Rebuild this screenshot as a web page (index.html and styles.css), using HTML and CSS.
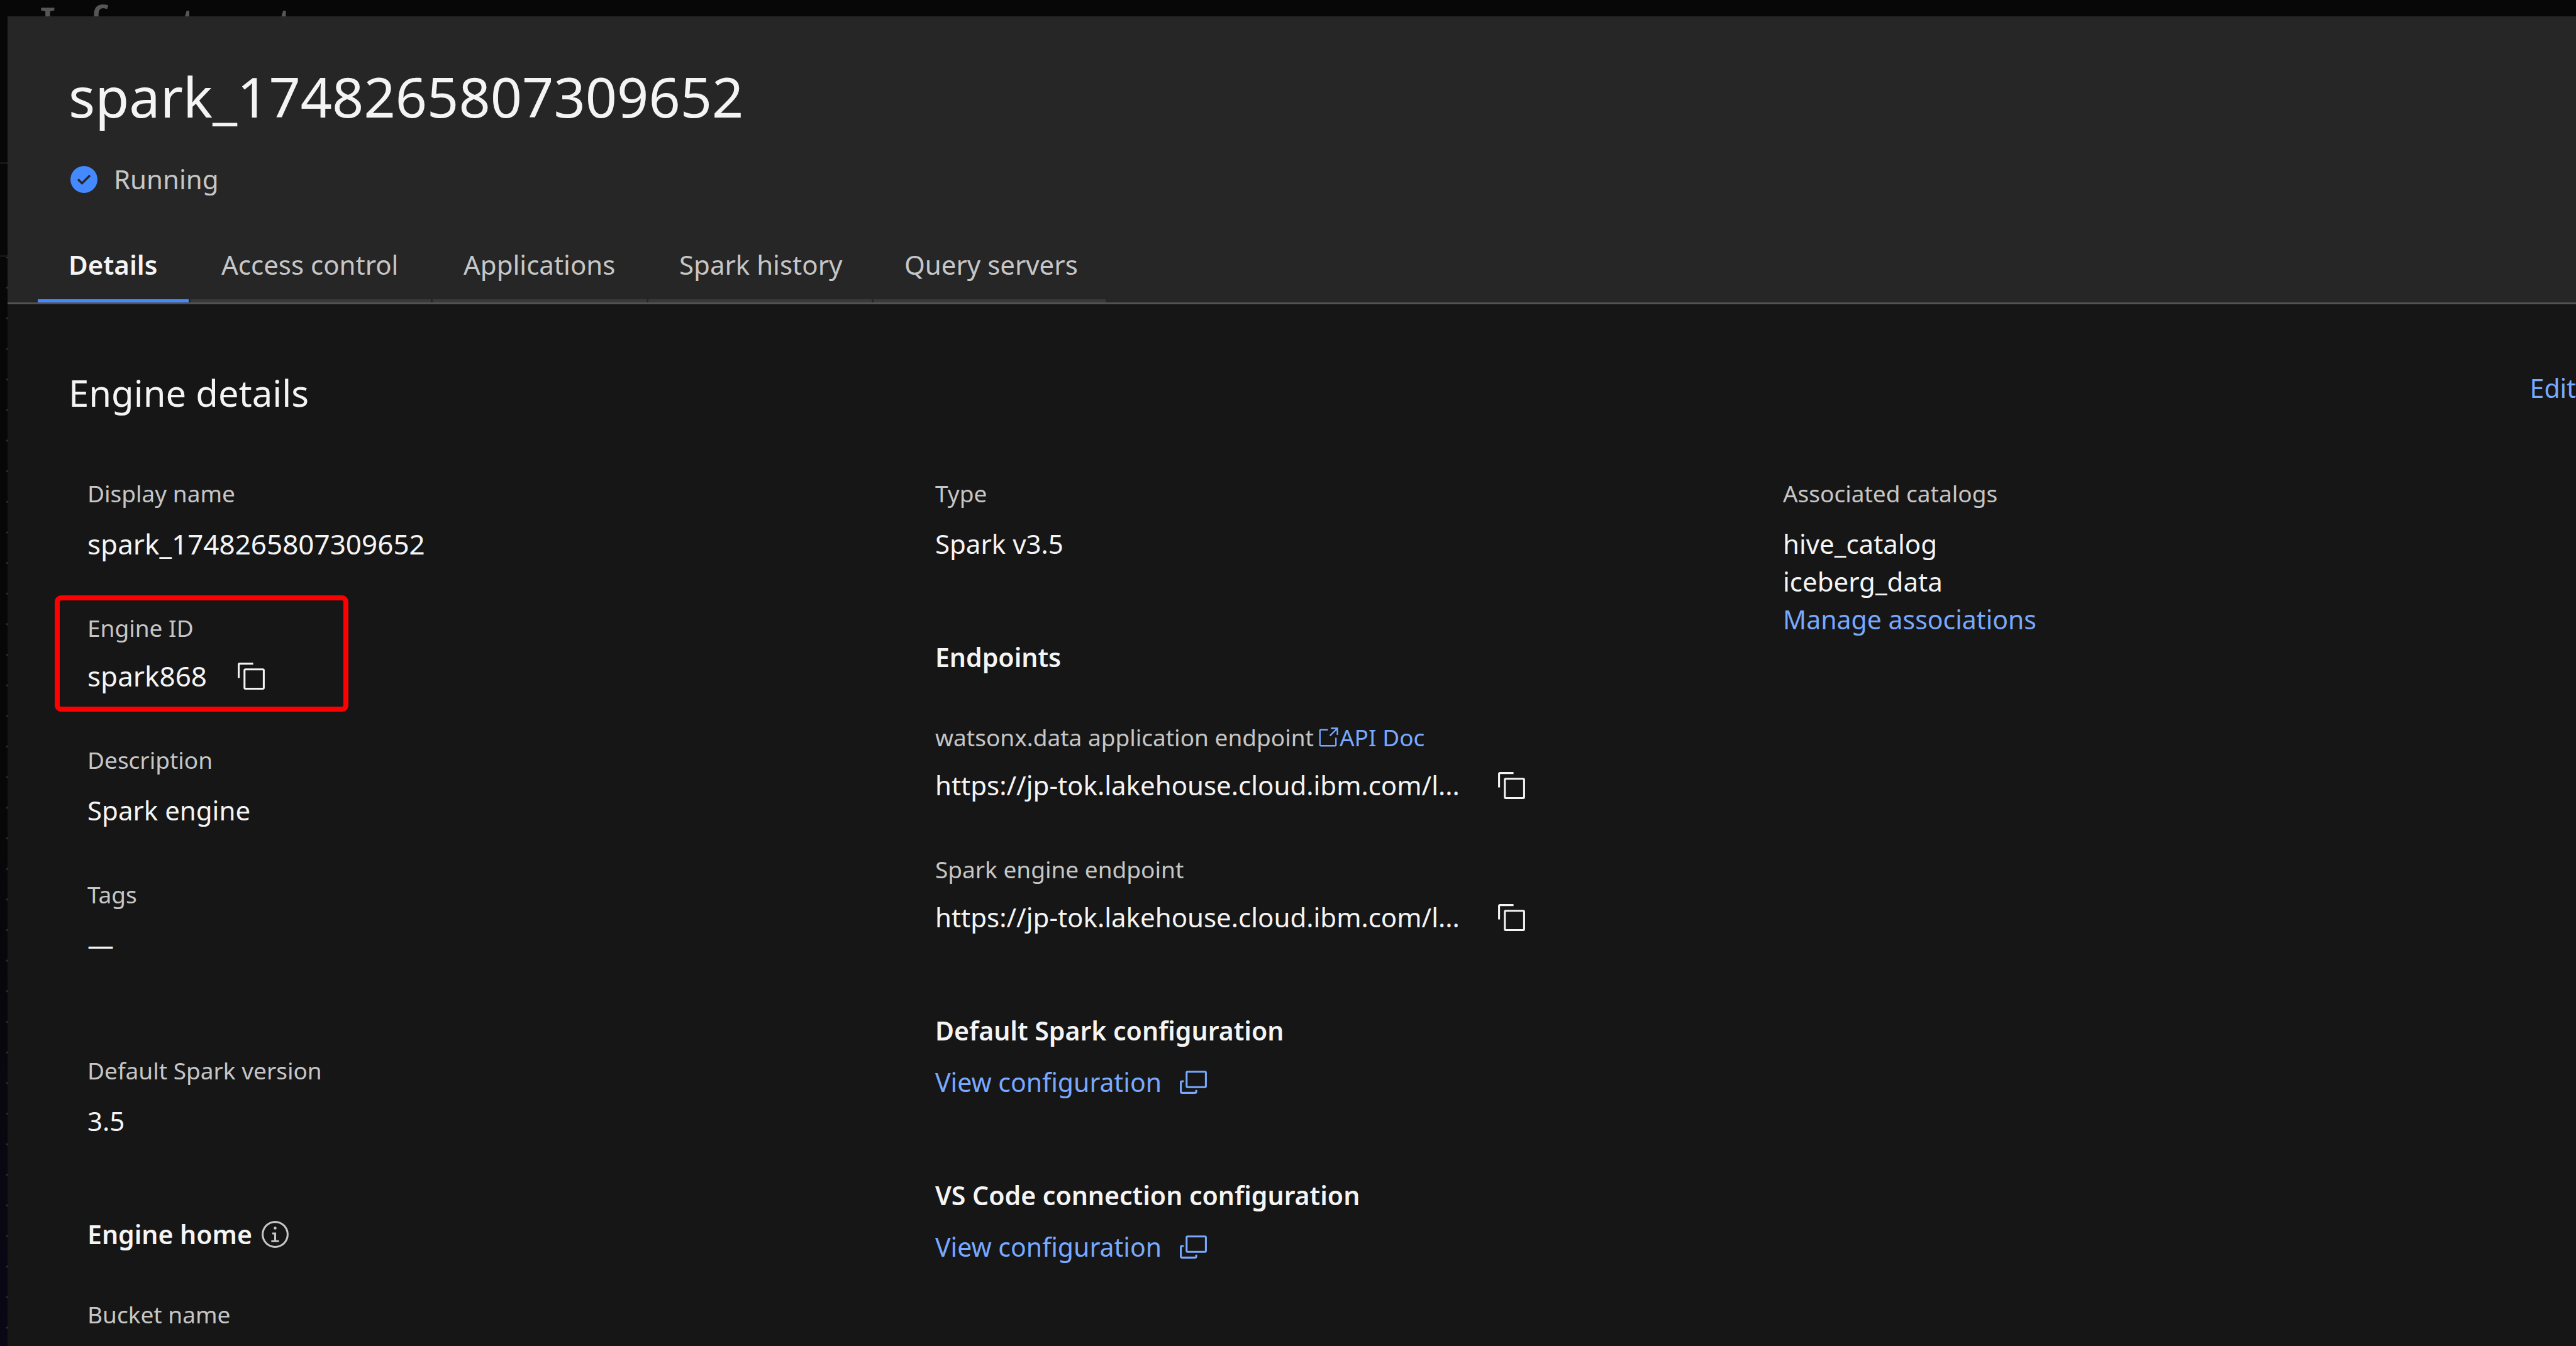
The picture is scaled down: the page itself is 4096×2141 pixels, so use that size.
FILE: index.html
```html
<!DOCTYPE html>
<html lang="en">
<head>
<meta charset="utf-8">
<title>spark_1748265807309652 - Engine details</title>
<link rel="stylesheet" href="styles.css">
</head>
<body>
<svg class="sprite" aria-hidden="true">
  <symbol id="i-copy" viewBox="0 0 32 32"><path d="M28,10V28H10V10H28m0-2H10a2,2,0,0,0-2,2V28a2,2,0,0,0,2,2H28a2,2,0,0,0,2-2V10a2,2,0,0,0-2-2Z M4,18H2V4A2,2,0,0,1,4,2H18V4H4Z"/></symbol>
  <symbol id="i-launch" viewBox="0 0 32 32"><path d="M26,28H6a2,2,0,0,1-2-2V6A2,2,0,0,1,6,4H16V6H6V26H26V16h2V26A2,2,0,0,1,26,28Z M20 2V4H26.586L18 12.586 19.414 14 28 5.414V12H30V2Z"/></symbol>
  <symbol id="i-popup" viewBox="0 0 32 32"><path d="M28,4H10A2,2,0,0,0,8,6V20a2,2,0,0,0,2,2H28a2,2,0,0,0,2-2V6A2,2,0,0,0,28,4Zm0,16H10V6H28Z M18,26H4V16H6V14H4a2,2,0,0,0-2,2V26a2,2,0,0,0,2,2H18a2,2,0,0,0,2-2V24H18Z"/></symbol>
  <symbol id="i-check" viewBox="0 0 32 32"><path d="M16,2A14,14,0,1,0,30,16,14,14,0,0,0,16,2ZM14,21.5908l-5-5L10.5906,15,14,18.4092,21.41,11l1.5957,1.5859Z"/></symbol>
  <symbol id="i-info" viewBox="0 0 32 32"><path d="M17 22V14H13V16H15V22H12V24H20V22Z M16,8a1.5,1.5,0,1,0,1.5,1.5A1.5,1.5,0,0,0,16,8Z M16,30A14,14,0,1,1,30,16,14,14,0,0,1,16,30ZM16,4A12,12,0,1,0,28,16,12,12,0,0,0,16,4Z"/></symbol>
</svg>

<div class="backdrop" aria-hidden="true">
  <div class="backdrop-head"><div class="backdrop-title">Infrastructure manager</div></div>
  <div class="backdrop-bar"></div>
  <div class="backdrop-canvas"></div>
</div>

<section class="panel">
  <header class="panel-head">
    <h1 class="title">spark_1748265807309652</h1>
    <div class="status"><svg class="icon status-icon"><use href="#i-check"/></svg><span>Running</span></div>
    <div class="tabs" role="tablist">
      <button class="tab tab-active" role="tab" aria-selected="true">Details</button>
      <button class="tab" role="tab">Access control</button>
      <button class="tab" role="tab">Applications</button>
      <button class="tab" role="tab">Spark history</button>
      <button class="tab" role="tab">Query servers</button>
    </div>
  </header>

  <main class="panel-body">
    <div class="section-head">
      <h2 class="section-title">Engine details</h2>
      <a class="link" href="#edit">Edit</a>
    </div>

    <div class="columns">
      <div class="column">
        <div class="field">
          <div class="label">Display name</div>
          <div class="value value-id">spark_1748265807309652</div>
        </div>
        <div class="field field-copy field-marked">
          <div class="label">Engine ID</div>
          <div class="value value-id copy-row"><span>spark868</span><button class="icon-button" aria-label="Copy engine ID"><svg class="icon"><use href="#i-copy"/></svg></button></div>
        </div>
        <div class="field">
          <div class="label">Description</div>
          <div class="value">Spark engine</div>
        </div>
        <div class="field">
          <div class="label">Tags</div>
          <div class="value">—</div>
        </div>
        <div class="field field-spaced">
          <div class="label">Default Spark version</div>
          <div class="value">3.5</div>
        </div>
        <h3 class="group-title">Engine home<svg class="icon info-icon"><use href="#i-info"/></svg></h3>
        <div class="field field-first">
          <div class="label">Bucket name</div>
        </div>
      </div>

      <div class="column">
        <div class="field">
          <div class="label">Type</div>
          <div class="value">Spark v3.5</div>
        </div>
        <h3 class="group-title">Endpoints</h3>
        <div class="field field-copy field-first">
          <div class="label label-row"><span>watsonx.data application endpoint</span><a class="label-link" href="#api-doc"><svg class="icon-small"><use href="#i-launch"/></svg>API Doc</a></div>
          <div class="value copy-row"><span class="url">https://jp-tok.lakehouse.cloud.ibm.com/l...</span><button class="icon-button" aria-label="Copy application endpoint"><svg class="icon"><use href="#i-copy"/></svg></button></div>
        </div>
        <div class="field field-copy">
          <div class="label">Spark engine endpoint</div>
          <div class="value copy-row"><span class="url">https://jp-tok.lakehouse.cloud.ibm.com/l...</span><button class="icon-button" aria-label="Copy Spark engine endpoint"><svg class="icon"><use href="#i-copy"/></svg></button></div>
        </div>
        <h3 class="group-title">Default Spark configuration</h3>
        <a class="link view-link" href="#spark-config">View configuration<svg class="icon"><use href="#i-popup"/></svg></a>
        <h3 class="group-title">VS Code connection configuration</h3>
        <a class="link view-link" href="#vscode-config">View configuration<svg class="icon"><use href="#i-popup"/></svg></a>
      </div>

      <div class="column">
        <div class="field">
          <div class="label">Associated catalogs</div>
          <div class="value">hive_catalog</div>
          <div class="value value-next">iceberg_data</div>
        </div>
        <a class="link" href="#associations">Manage associations</a>
      </div>
    </div>
  </main>
</section>
</body>
</html>
```
FILE: styles.css
```css
*, *::after { box-sizing: border-box; }

body {
  margin: 0;
  height: 100vh;
  overflow: hidden;
  position: relative;
  background: #070707;
  color: #f4f4f4;
  font: 42px/60px "Noto Sans", "Open Sans", sans-serif;
}

h1, h2, h3 { margin: 0; }
a { text-decoration: none; }
button { font: inherit; border: 0; background: none; padding: 0; cursor: pointer; }

.sprite { position: absolute; width: 0; height: 0; }
.icon { width: 49px; height: 49px; fill: currentColor; flex: none; }
.icon-small { width: 37px; height: 37px; fill: currentColor; flex: none; }

/* Page behind the panel */
.backdrop { display: flex; flex-direction: column; height: 100%; }
.backdrop-head { height: 261px; padding-left: 62px; border-bottom: 3px solid #161616; }
.backdrop-title { font-size: 82px; line-height: 78px; color: #565656; }
.backdrop-bar { height: 148px; border-bottom: 3px solid #161616; }
.backdrop-canvas {
  flex: 1;
  background:
    radial-gradient(circle, #363636 1px, transparent 2px) -13px calc(100vh / -88) / calc(100vh / 44) calc(100vh / 44),
    linear-gradient(#070707 50%, #0a0716);
}

/* Panel */
.panel {
  position: absolute;
  inset: 26px 0 0 12px;
  overflow: hidden;
  background: #161616;
}
.panel-head { padding: 73px 0 0 48px; background: #262626; border-bottom: 3px solid #525252; }
.title { margin-left: 49px; font-size: 88px; line-height: 108px; font-weight: 400; }
.status { display: flex; align-items: center; gap: 23px; margin: 48px 0 50px 49px; color: #c6c6c6; }
.status-icon { color: #4589ff; }

.tabs { display: grid; grid-template-columns: 240px 382px 340px 355px 369px; gap: 3px; }
.tab {
  padding: 26px 0 25px 49px;
  border-bottom: 5px solid #393939;
  color: #c6c6c6;
  text-align: left;
  white-space: nowrap;
}
.tab-active { color: #f4f4f4; font-weight: 600; border-bottom-color: #4589ff; }

.panel-body { padding: 103px 0 0 97px; }
.section-head { display: flex; justify-content: space-between; align-items: flex-start; }
.section-title { font-size: 58px; line-height: 76px; font-weight: 400; }

.columns { display: grid; grid-template-columns: 31fr 31fr 29fr; margin: 98px 0 0 30px; white-space: nowrap; }
.field + .field { margin-top: 80px; }
.field + .field-spaced { margin-top: 146px; }
.label { font-size: 37px; line-height: 48px; color: #c6c6c6; }
.label-row { display: flex; gap: 4px; }
.label-link { display: flex; align-items: center; color: #78a9ff; }
.value { margin-top: 26px; }
.value-id { font-size: 44px; }
.value-next { margin-top: 0; }
.field-copy .value { margin-top: 22px; }
.copy-row { display: flex; align-items: center; gap: 46px; }
.url { width: 846px; }
.icon-button { display: flex; color: #f4f4f4; }

.field-marked { position: relative; }
.field-marked::after {
  content: "";
  position: absolute;
  top: -28px;
  bottom: -27px;
  left: -52px;
  width: 467px;
  border: 8px solid #ff0000;
  border-radius: 10px;
  pointer-events: none;
}

.group-title { display: flex; align-items: center; margin-top: 120px; font-size: 41px; line-height: 60px; font-weight: 600; }
.group-title + .field-first { margin-top: 74px; }
.info-icon { margin-left: 12px; color: #c6c6c6; }

.link { font-size: 41px; color: #78a9ff; }
.view-link { display: flex; align-items: center; gap: 26px; width: max-content; margin-top: 22px; }
```
